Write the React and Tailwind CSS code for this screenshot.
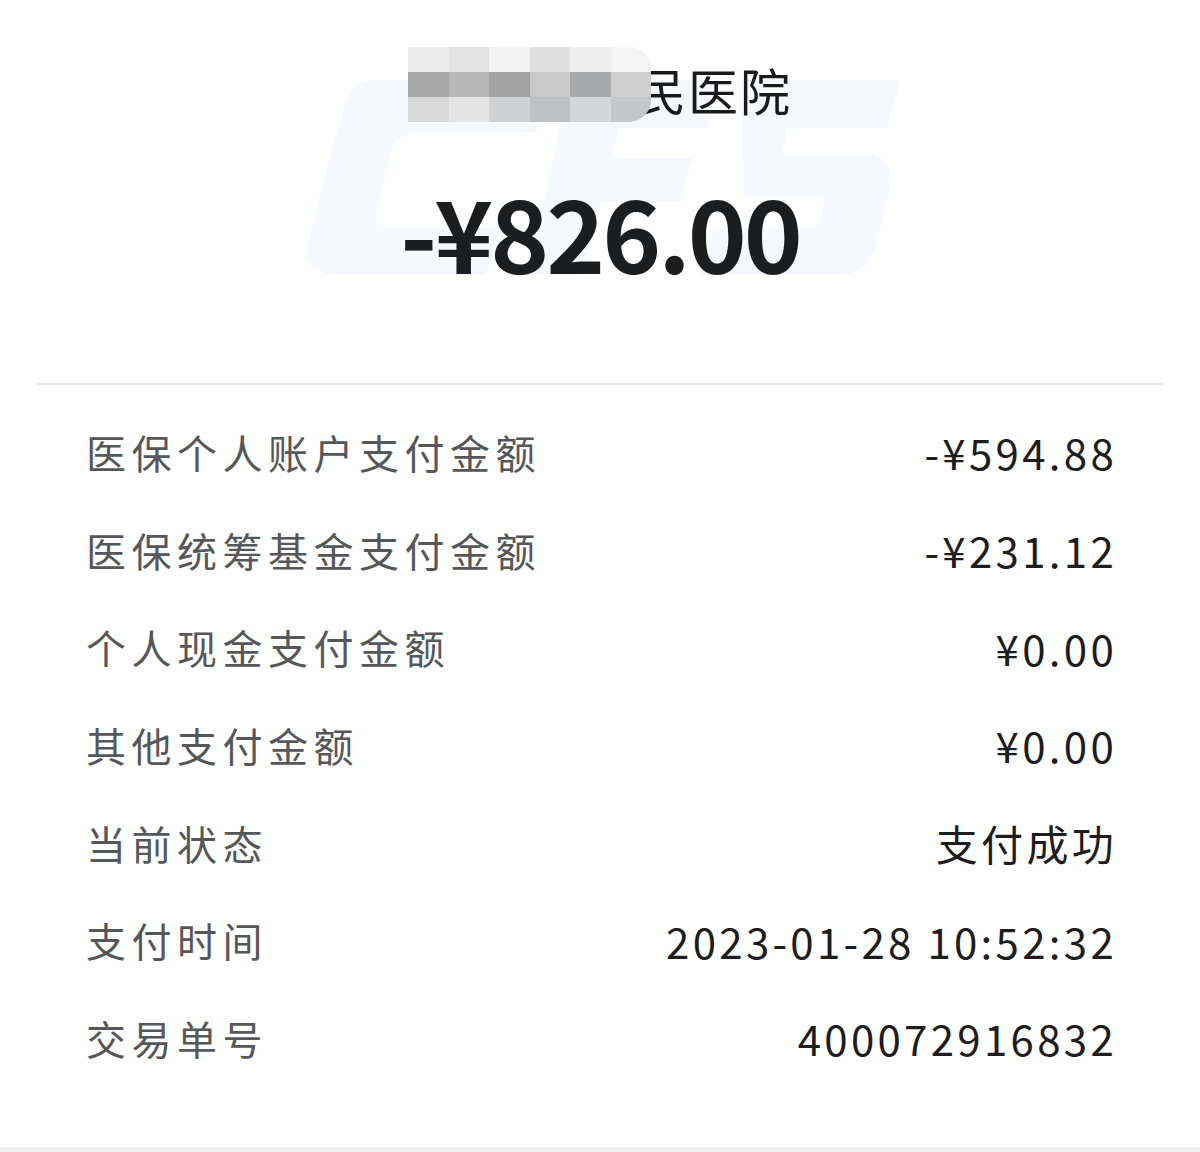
import React from 'react';

const rows = [
  { label: '医保个人账户支付金额', value: '-¥594.88' },
  { label: '医保统筹基金支付金额', value: '-¥231.12' },
  { label: '个人现金支付金额', value: '¥0.00' },
  { label: '其他支付金额', value: '¥0.00' },
  { label: '当前状态', value: '支付成功' },
  { label: '支付时间', value: '2023-01-28 10:52:32' },
  { label: '交易单号', value: '400072916832' },
];

// mosaic tiles over the hidden part of the hospital name
const mosaic = [
  ['#ececec', '#e4e4e4', '#f2f2f2', '#e0e0e0', '#eeeeee', '#f5f5f5'],
  ['#a9a9a9', '#b8b8b8', '#a3a3a3', '#c9c9c9', '#a8a9ab', '#cfcfcf'],
  ['#d9d9d9', '#e5e5e5', '#cfd1d4', '#bfc1c4', '#d4d6d8', '#c4c6c9'],
];

function Watermark() {
  return (
    <svg className="absolute left-[300px] top-[70px]" width="610" height="210" viewBox="0 0 610 210">
      <g fill="#f5f8fc">
        <path d="M70 10 H250 L236 62 H120 Q96 62 90 86 L76 140 Q72 158 92 158 H200 L186 205 H40 Q0 205 8 170 L40 50 Q50 10 70 10 Z" />
        <path d="M270 10 H420 L408 58 H320 L312 88 H392 L380 132 H300 L282 205 H228 Z" />
        <path d="M440 10 H600 L588 58 H488 L482 84 H560 Q598 84 590 122 L576 176 Q568 205 536 205 H400 L414 158 H516 L526 128 H444 Z" />
      </g>
    </svg>
  );
}

export default function App() {
  return (
    <div
      className="relative w-[1200px] h-[1152px] bg-white overflow-hidden"
      style={{ fontFamily: '"Noto Sans CJK SC", "Noto Sans", sans-serif' }}
    >
      <Watermark />

      <div className="relative h-[383px] flex flex-col items-center">
        <div className="relative mt-[58px] ml-[20px] h-[62px] flex items-center text-[50px] leading-none text-[#1a1a1a] tracking-[2px]">
          <span className="text-[#cfcfcf]">某某市人</span>
          <span>民医院</span>
          <div className="absolute left-[-20px] top-[-11px] w-[243px] h-[75px] grid grid-rows-3 rounded-r-[22px] overflow-hidden">
            {mosaic.map((r, i) => (
              <div key={i} className="flex">
                {r.map((c, j) => (
                  <div key={j} className="flex-1" style={{ background: c }} />
                ))}
              </div>
            ))}
          </div>
        </div>
        <div className="mt-[61px] text-[100px] leading-none font-bold text-[#1c1d1f] tracking-[-3px]">
          -¥826.00
        </div>
      </div>

      <div className="mx-[36px] h-[2px] bg-[#ebebeb]" />

      <div className="pt-[18px] px-[86px]">
        {rows.map((r) => (
          <div key={r.label} className="h-[97.7px] flex items-center justify-between">
            <span className="text-[40px] tracking-[5.5px] text-[#56575a]">{r.label}</span>
            <span className="text-[42px] tracking-[3.3px] mr-[-3px] text-[#1d1d1f]">{r.value}</span>
          </div>
        ))}
      </div>

      <div className="absolute left-0 right-0 bottom-0 h-[5px] bg-[#f1f1f1]" />
    </div>
  );
}
